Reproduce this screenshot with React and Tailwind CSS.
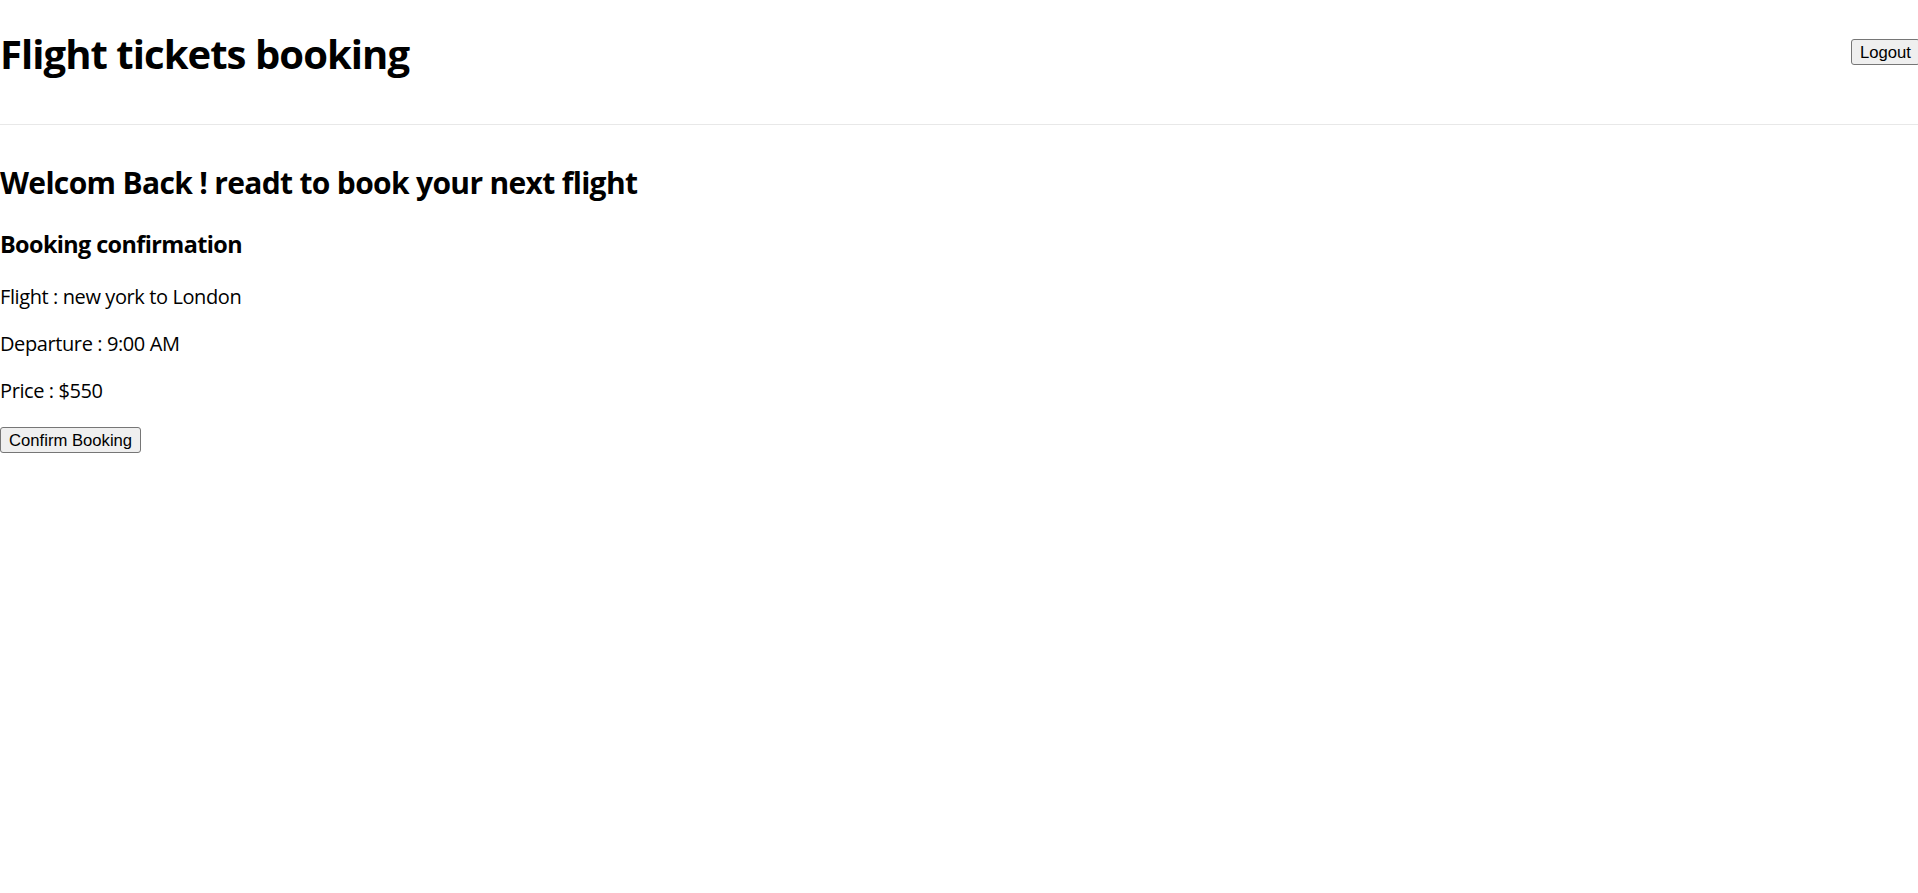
export default function App() {
  const sans = "font-['Open_Sans',sans-serif]";
  const btn =
    "font-['Liberation_Sans',Arial,sans-serif] text-[16.67px] leading-[19px] h-[26px] px-[8px] bg-[#efefef] border border-[#767676] rounded-[3px] text-black";

  return (
    <div className={`min-h-screen w-full overflow-hidden bg-white text-black ${sans}`}>
      {/* Header */}
      <header className="flex items-start justify-between w-[calc(100%+2px)] pt-[30px] pb-[46px] border-b border-[#e8e8e8]">
        <h1 className="text-[40px] leading-[48px] tracking-[-0.95px] font-bold">Flight tickets booking</h1>
        <button className={`${btn} mt-[9px]`}>Logout</button>
      </header>

      <main>
        <h2 className="mt-[40px] text-[30px] leading-[36px] tracking-[-0.67px] font-bold">
          Welcom Back ! readt to book your next flight
        </h2>

        <div className="mt-[29px]">
          <h3 className="text-[23.4px] leading-[28px] tracking-[-0.6px] font-bold">Booking confirmation</h3>
          <div className="mt-[26px] flex flex-col gap-[21px] text-[20px] leading-[26px] tracking-[-0.4px]">
            <p>Flight : new york to London</p>
            <p>Departure : 9:00 AM</p>
            <p>Price : $550</p>
          </div>
          <button className={`${btn} mt-[23px]`}>Confirm Booking</button>
        </div>
      </main>
    </div>
  );
}
